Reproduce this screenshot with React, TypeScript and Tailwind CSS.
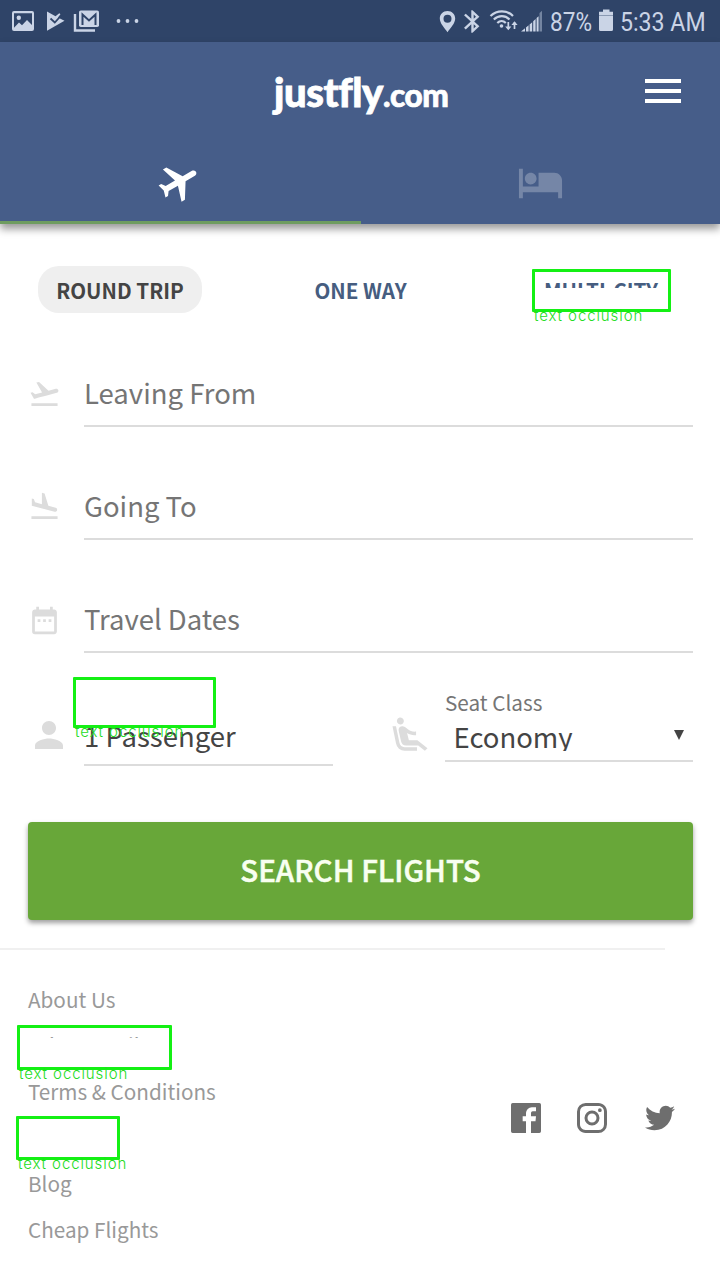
import React from "react";
import {
  MdAirlineSeatReclineExtra,
  MdBluetooth,
  MdDateRange,
  MdFlight,
  MdFlightLand,
  MdFlightTakeoff,
  MdHotel,
  MdPerson,
} from "react-icons/md";
import { FaTwitter } from "react-icons/fa";

function StatusBar() {
  return (
    <div className="flex h-[42px] items-start justify-between bg-[#2f4468] text-[#cad4e6]">
      <svg width="150" height="42" viewBox="0 0 150 42" fill="currentColor">
        <path
          fillRule="evenodd"
          d="M14 11h18a2 2 0 0 1 2 2v16a2 2 0 0 1-2 2H14a2 2 0 0 1-2-2V13a2 2 0 0 1 2-2Zm0 2.2v14.5l5-5.2 3 2.8 5-5.3 5 5V13.2Z"
        />
        <circle cx="18.8" cy="17.8" r="2.2" />
        <path d="M47 11.500l8.500 4.700 3.800-3 1.200 1-2.500 3.300 6.500 3.300-17.500 10Z" />
        <path d="M50.500 18.500l4.300 4 6.800-7.500" fill="none" stroke="#2f4468" strokeWidth="1.800" />
        <path d="M75 14v16.5h20" fill="none" stroke="currentColor" strokeWidth="2.4" />
        <rect x="79" y="10.5" width="20" height="16.5" rx="1.8" />
        <path d="M82.5 25V14.5l6.500 6 6.500-6V25" fill="none" stroke="#2f4468" strokeWidth="2" />
        <circle cx="118.500" cy="21" r="1.9" />
        <circle cx="127.500" cy="21" r="1.9" />
        <circle cx="136.500" cy="21" r="1.9" />
      </svg>
      <div className="flex h-[42px] items-start font-[Roboto] text-[26px] leading-[44px] whitespace-nowrap">
        <svg width="22" height="42" viewBox="436 0 22 42" fill="currentColor">
          <path
            fillRule="evenodd"
            d="M447.500 11c4.500 0 7.700 3.300 7.700 7.600 0 4.900-4.700 9.500-7.700 13.600-3-4.100-7.700-8.700-7.700-13.600 0-4.300 3.200-7.600 7.700-7.600Zm0 3.700a4 4 0 1 0 0 8 4 4 0 0 0 0-8Z"
          />
        </svg>
        <MdBluetooth className="mt-2 h-[27px] w-[29px]" preserveAspectRatio="none" />
        <svg width="62" height="42" viewBox="487 0 62 42" fill="currentColor">
          <g fill="none" stroke="currentColor" strokeWidth="2.200">
            <path d="M490.500 16c6.500-6.200 16.500-6.200 22.500 0" />
            <path d="M493.800 19.500c4.700-4.500 11.500-4.500 15.700 0" />
            <path d="M497.300 23c2.600-2.500 6-2.500 8.500 0" />
            <path strokeWidth="1.700" d="M508.300 22v7M514.500 29v-6.500" />
          </g>
          <circle cx="501.500" cy="26" r="1.800" />
          <path d="M505.200 26.500h6.200l-3.100 3.800ZM511.400 25h6.200l-3.100-3.800Z" />
          <path d="M521 31.500l4-3.200v3.200ZM526 27.500l2.600-2.200v6.200H526ZM529.600 24.400l2.600-2.200v9.300h-2.600ZM533.200 21.200l2.400-2.200v12.500h-2.400ZM536.600 18l2-1.800v15.300h-2Z" />
          <path opacity=".45" d="M539.500 13l2.500-2.300v20.800h-2.500Z" />
        </svg>
        <div className="w-[47px] pl-px">
          <span className="inline-block origin-left scale-x-[0.87]">87%</span>
        </div>
        <svg width="24" height="42" viewBox="596 0 24 42" fill="currentColor">
          <path d="M603 9.500h6.500v2.200h3.500v3.300h-14v-3.300h4Z" />
          <path d="M599 16h14v13.500a1.500 1.500 0 0 1-1.500 1.500h-11a1.500 1.500 0 0 1-1.500-1.500Z" />
          <path d="M599 14h14v2h-14Z" opacity=".6" />
        </svg>
        <div className="w-[100px]">
          <span className="inline-block origin-left scale-x-[0.89]">5:33 AM</span>
        </div>
      </div>
    </div>
  );
}

function Header() {
  return (
    <header className="relative z-10 flex h-[182px] flex-col bg-[#465d89] text-white shadow-[0_5px_8px_rgba(0,0,0,0.4)]">
      <div className="flex h-[98px] items-start justify-between pr-[39px] pl-[274px]">
        <div className="flex items-baseline pt-[22px] font-[Lato] font-black leading-[56px] whitespace-nowrap">
          <span className="text-[40px] tracking-[-0.4px] [-webkit-text-stroke:0.8px_white]">justfly</span>
          <span className="text-[31.500px] tracking-[-0.5px] [-webkit-text-stroke:0.7px_white]">.com</span>
        </div>
        <div className="mt-[37px] flex w-9 flex-col gap-[6px]">
          <div className="h-1 bg-white" />
          <div className="h-[3.500px] bg-white" />
          <div className="h-1 bg-white" />
        </div>
      </div>
      <div className="flex flex-1">
        <div className="flex w-[361px] justify-center border-b-[3px] border-[#6e9c60] pr-[3px]">
          <MdFlight className="mt-[19px] size-[47px] rotate-60" />
        </div>
        <div className="flex flex-1 justify-center">
          <MdHotel className="mt-[19px] size-[47px] text-[#7586a7]" />
        </div>
      </div>
    </header>
  );
}

function Field({ icon, label }: { icon: React.ReactNode; label: string }) {
  return (
    <div className="flex h-[113px] pr-[27px] pl-7">
      <div className="w-14 pt-[63px] text-[#dcdcdc]">{icon}</div>
      <div className="flex-1 border-b-2 border-[#dcdcdc] pt-[57.500px] text-[27.500px] leading-10 text-[#757575]">
        {label}
      </div>
    </div>
  );
}

function Note({ className }: { className: string }) {
  return (
    <div className={"absolute rounded-[1px] border-[3px] border-[#14f014] " + className}>
      <span className="absolute top-full left-[-1px] -mt-px font-[Inter] text-[15px] leading-4 font-light tracking-[0.9px] whitespace-pre text-[#22dc22]">
        text occlusion
      </span>
    </div>
  );
}

function SocialLinks() {
  return (
    <div className="flex h-10 items-center text-[#6e6e6e]">
      <svg width="40" height="40" viewBox="0 0 24 24" fill="currentColor">
        <path d="M4 3h16a1 1 0 0 1 1 1v16a1 1 0 0 1-1 1h-5v-7h2.700l.3-3h-3V9a1 1 0 0 1 1-1h2V5.500h-2.500A3.500 3.500 0 0 0 12 9v2h-2v3h2v7H4a1 1 0 0 1-1-1V4a1 1 0 0 1 1-1Z" />
      </svg>
      <svg className="ml-7" width="36" height="36" viewBox="0 0 24 24" fill="currentColor">
        <path d="M7.800 2h8.400C19.400 2 22 4.600 22 7.800v8.400a5.800 5.800 0 0 1-5.800 5.800H7.800C4.600 22 2 19.400 2 16.200V7.800A5.800 5.800 0 0 1 7.800 2m-.2 2A3.600 3.600 0 0 0 4 7.600v8.800C4 18.390 5.610 20 7.600 20h8.800a3.600 3.600 0 0 0 3.600-3.600V7.600C20 5.610 18.390 4 16.400 4H7.600m9.650 1.500a1.250 1.250 0 1 1 0 2.500 1.250 1.250 0 0 1 0-2.500M12 7a5 5 0 1 1 0 10 5 5 0 0 1 0-10m0 2a3 3 0 1 0 0 6 3 3 0 0 0 0-6Z" />
      </svg>
      <FaTwitter className="ml-[35px] size-[30px]" />
    </div>
  );
}

export default function App() {
  return (
    <div className="relative h-[1280px] w-[720px] overflow-hidden bg-white font-['Noto_Sans_CJK_SC',sans-serif]">
      <StatusBar />
      <Header />

      <div className="flex h-[90px] items-start pt-[42px] pl-[38px] text-[20.600px] leading-[49px] font-bold whitespace-nowrap text-[#465d80]">
        <div className="h-[47px] w-[164px] rounded-[21px] bg-[#efefef] text-center text-[#444]">
          ROUND TRIP
        </div>
        <div className="w-[317px] text-center">ONE WAY</div>
        <div className="h-[22px] w-[164px] overflow-hidden text-center">MULTI-CITY</div>
      </div>

      <Field icon={<MdFlightTakeoff size={33} />} label="Leaving From" />
      <Field icon={<MdFlightLand size={33} />} label="Going To" />
      <Field icon={<MdDateRange size={33} className="translate-y-px" />} label="Travel Dates" />

      <div className="flex h-[169px] pl-7 text-[27.500px] text-[#444]">
        <MdPerson size={42} className="mt-[61px] text-[#dcdcdc]" />
        <div className="ml-[14px] h-[113px] w-[249px] border-b-2 border-[#dcdcdc] pt-[62px] leading-10">
          1 Passenger
        </div>
        <MdAirlineSeatReclineExtra size={42} className="mt-[61px] ml-[56px] text-[#dcdcdc]" />
        <div className="ml-[14px] h-[109px] w-[248px] border-b-2 border-[#dcdcdc]">
          <div className="pt-[33px] text-[20.700px] leading-[32px] text-[#757575]">Seat Class</div>
          <div className="flex h-[33px] items-start justify-between overflow-hidden pr-[9px] pl-[8.500px]">
            <span className="-mt-[2px] leading-10">Economy</span>
            <svg className="mt-3" width="10" height="10" viewBox="0 0 10 10">
              <path d="M0 0h10L5 10Z" fill="#444" />
            </svg>
          </div>
        </div>
      </div>

      <button className="ml-7 block h-[98px] w-[665px] rounded-[4px] bg-[#68a739] pb-1 text-[29.500px] leading-[94px] font-medium text-[#f8fff0] shadow-[0_3px_5px_rgba(0,0,0,0.38)] [-webkit-text-stroke:0.5px_#f8fff0]">
        SEARCH FLIGHTS
      </button>
      <div className="mt-7 h-[2px] w-[665px] bg-[#f0f0f0]" />

      <footer className="flex items-start justify-between pt-[26px] pr-[45px] pl-7 text-[20.700px] leading-[46px] text-[#999]">
        <nav className="flex flex-col">
          <a>About Us</a>
          <a className="mb-[30px] h-[16px] overflow-hidden">Privacy Policy</a>
          <a>Terms &amp; Conditions</a>
          <div className="h-[46px]" />
          <a>Blog</a>
          <a>Cheap Flights</a>
        </nav>
        <div className="pt-[122px]">
          <SocialLinks />
        </div>
      </footer>

      <Note className="top-[269px] left-[532px] h-[43px] w-[139px]" />
      <Note className="top-[677px] left-[73px] h-[51px] w-[143px]" />
      <Note className="top-[1025px] left-[17px] h-[45px] w-[155px]" />
      <Note className="top-[1116px] left-[16px] h-[44px] w-[104px]" />
    </div>
  );
}
